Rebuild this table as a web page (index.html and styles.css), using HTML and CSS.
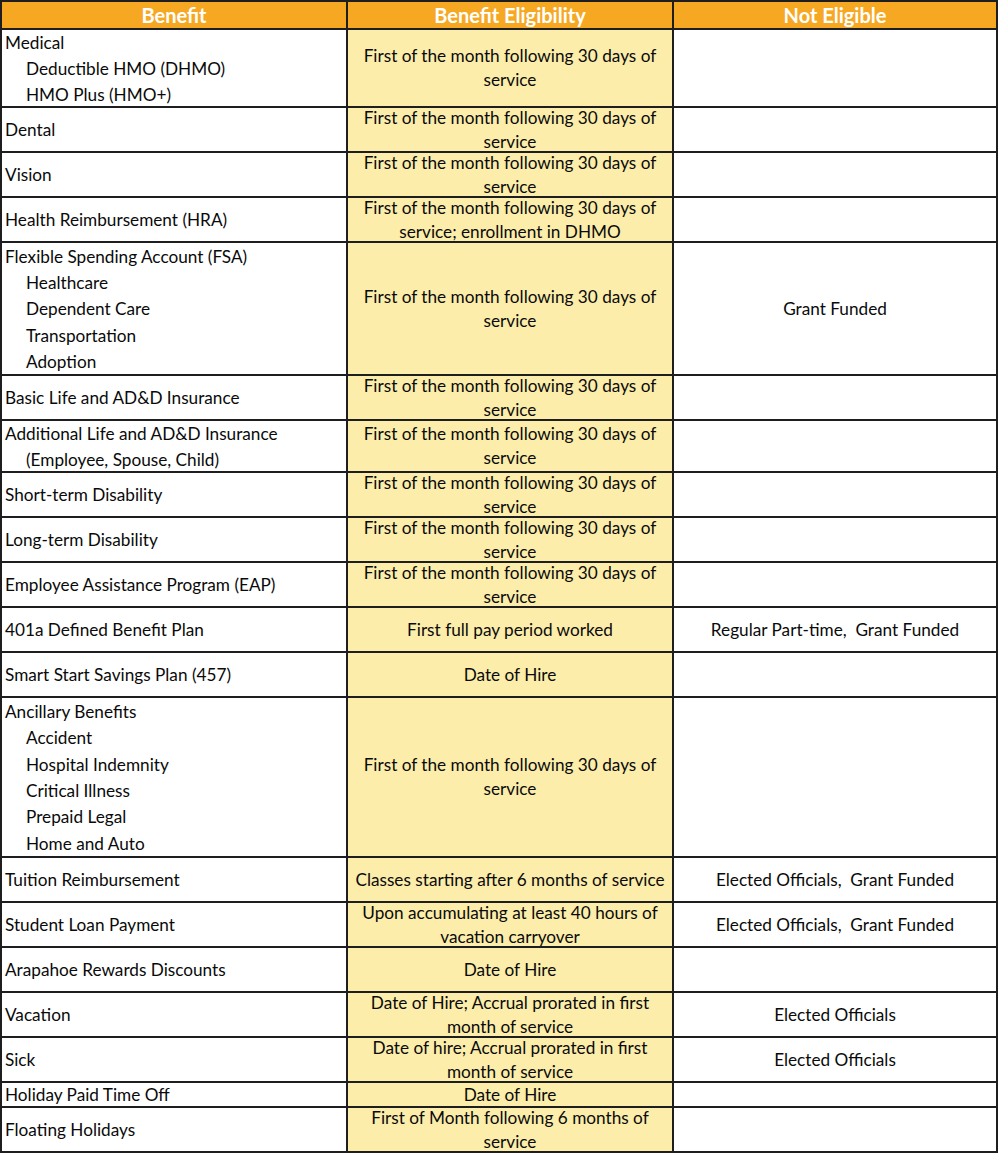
FILE: index.html
```
<!DOCTYPE html>
<html>
<head>
<meta charset="utf-8">
<link rel="stylesheet" href="styles.css">
</head>
<body>
<div class="grid">
  <div class="cell hd">Benefit</div>
  <div class="cell hd">Benefit Eligibility</div>
  <div class="cell hd">Not Eligible</div>

  <div class="cell b"><div>Medical</div><div class="sub">Deductible HMO (DHMO)</div><div class="sub">HMO Plus (HMO+)</div></div>
  <div class="cell e">First of the month following 30 days of<br>service</div>
  <div class="cell n"></div>

  <div class="cell b"><div>Dental</div></div>
  <div class="cell e">First of the month following 30 days of<br>service</div>
  <div class="cell n"></div>

  <div class="cell b"><div>Vision</div></div>
  <div class="cell e">First of the month following 30 days of<br>service</div>
  <div class="cell n"></div>

  <div class="cell b"><div>Health Reimbursement (HRA)</div></div>
  <div class="cell e">First of the month following 30 days of<br>service; enrollment in DHMO</div>
  <div class="cell n"></div>

  <div class="cell b"><div>Flexible Spending Account (FSA)</div><div class="sub">Healthcare</div><div class="sub">Dependent Care</div><div class="sub">Transportation</div><div class="sub">Adoption</div></div>
  <div class="cell e">First of the month following 30 days of<br>service</div>
  <div class="cell n">Grant Funded</div>

  <div class="cell b"><div>Basic Life and AD&amp;D Insurance</div></div>
  <div class="cell e">First of the month following 30 days of<br>service</div>
  <div class="cell n"></div>

  <div class="cell b"><div>Additional Life and AD&amp;D Insurance</div><div class="sub">(Employee, Spouse, Child)</div></div>
  <div class="cell e">First of the month following 30 days of<br>service</div>
  <div class="cell n"></div>

  <div class="cell b"><div>Short-term Disability</div></div>
  <div class="cell e">First of the month following 30 days of<br>service</div>
  <div class="cell n"></div>

  <div class="cell b"><div>Long-term Disability</div></div>
  <div class="cell e">First of the month following 30 days of<br>service</div>
  <div class="cell n"></div>

  <div class="cell b"><div>Employee Assistance Program (EAP)</div></div>
  <div class="cell e">First of the month following 30 days of<br>service</div>
  <div class="cell n"></div>

  <div class="cell b"><div>401a Defined Benefit Plan</div></div>
  <div class="cell e">First full pay period worked</div>
  <div class="cell n">Regular Part-time,&nbsp; Grant Funded</div>

  <div class="cell b"><div>Smart Start Savings Plan (457)</div></div>
  <div class="cell e">Date of Hire</div>
  <div class="cell n"></div>

  <div class="cell b"><div>Ancillary Benefits</div><div class="sub">Accident</div><div class="sub">Hospital Indemnity</div><div class="sub">Critical Illness</div><div class="sub">Prepaid Legal</div><div class="sub">Home and Auto</div></div>
  <div class="cell e">First of the month following 30 days of<br>service</div>
  <div class="cell n"></div>

  <div class="cell b"><div>Tuition Reimbursement</div></div>
  <div class="cell e">Classes starting after 6 months of service</div>
  <div class="cell n">Elected Officials,&nbsp; Grant Funded</div>

  <div class="cell b"><div>Student Loan Payment</div></div>
  <div class="cell e">Upon accumulating at least 40 hours of<br>vacation carryover</div>
  <div class="cell n">Elected Officials,&nbsp; Grant Funded</div>

  <div class="cell b"><div>Arapahoe Rewards Discounts</div></div>
  <div class="cell e">Date of Hire</div>
  <div class="cell n"></div>

  <div class="cell b"><div>Vacation</div></div>
  <div class="cell e">Date of Hire; Accrual prorated in first<br>month of service</div>
  <div class="cell n">Elected Officials</div>

  <div class="cell b"><div>Sick</div></div>
  <div class="cell e">Date of hire; Accrual prorated in first<br>month of service</div>
  <div class="cell n">Elected Officials</div>

  <div class="cell b"><div>Holiday Paid Time Off</div></div>
  <div class="cell e">Date of Hire</div>
  <div class="cell n"></div>

  <div class="cell b"><div>Floating Holidays</div></div>
  <div class="cell e">First of Month following 6 months of<br>service</div>
  <div class="cell n"></div>
</div>
</body>
</html>
```
FILE: styles.css
```
html, body {
  margin: 0;
  padding: 0;
  background: #ffffff;
}

.grid {
  display: grid;
  width: 998px;
  box-sizing: border-box;
  padding: 2px;
  gap: 2px;
  background: #1e1e1e;
  grid-template-columns: 344px 324px 322px;
  grid-template-rows: 26px 76px 43px 43px 43px 131px 43px 50px 43px 43px 43px 43px 43px 158px 43px 43px 43px 43px 43px 23px 43px;
  font-family: Lato, "Open Sans", sans-serif;
  font-size: 17.2px;
  color: #0a0a0a;
}

.cell {
  background: #ffffff;
  display: flex;
  flex-direction: column;
  justify-content: center;
  min-height: 0;
  overflow: visible;
  white-space: nowrap;
  box-sizing: border-box;
  padding-top: 2px;
}

.hd {
  background: #f7a823;
  color: #ffffff;
  font-weight: bold;
  font-size: 20px;
  align-items: center;
  line-height: 24px;
  padding-top: 0;
}

.b {
  padding-left: 3px;
  line-height: 26.3px;
  align-items: flex-start;
  padding-top: 2px;
}

.sub {
  padding-left: 21px;
}

.e {
  background: #fcedaa;
  align-items: center;
  text-align: center;
  line-height: 24px;
  padding-top: 0;
}

.n {
  align-items: center;
  text-align: center;
  line-height: 24px;
  padding-top: 0;
}
```
